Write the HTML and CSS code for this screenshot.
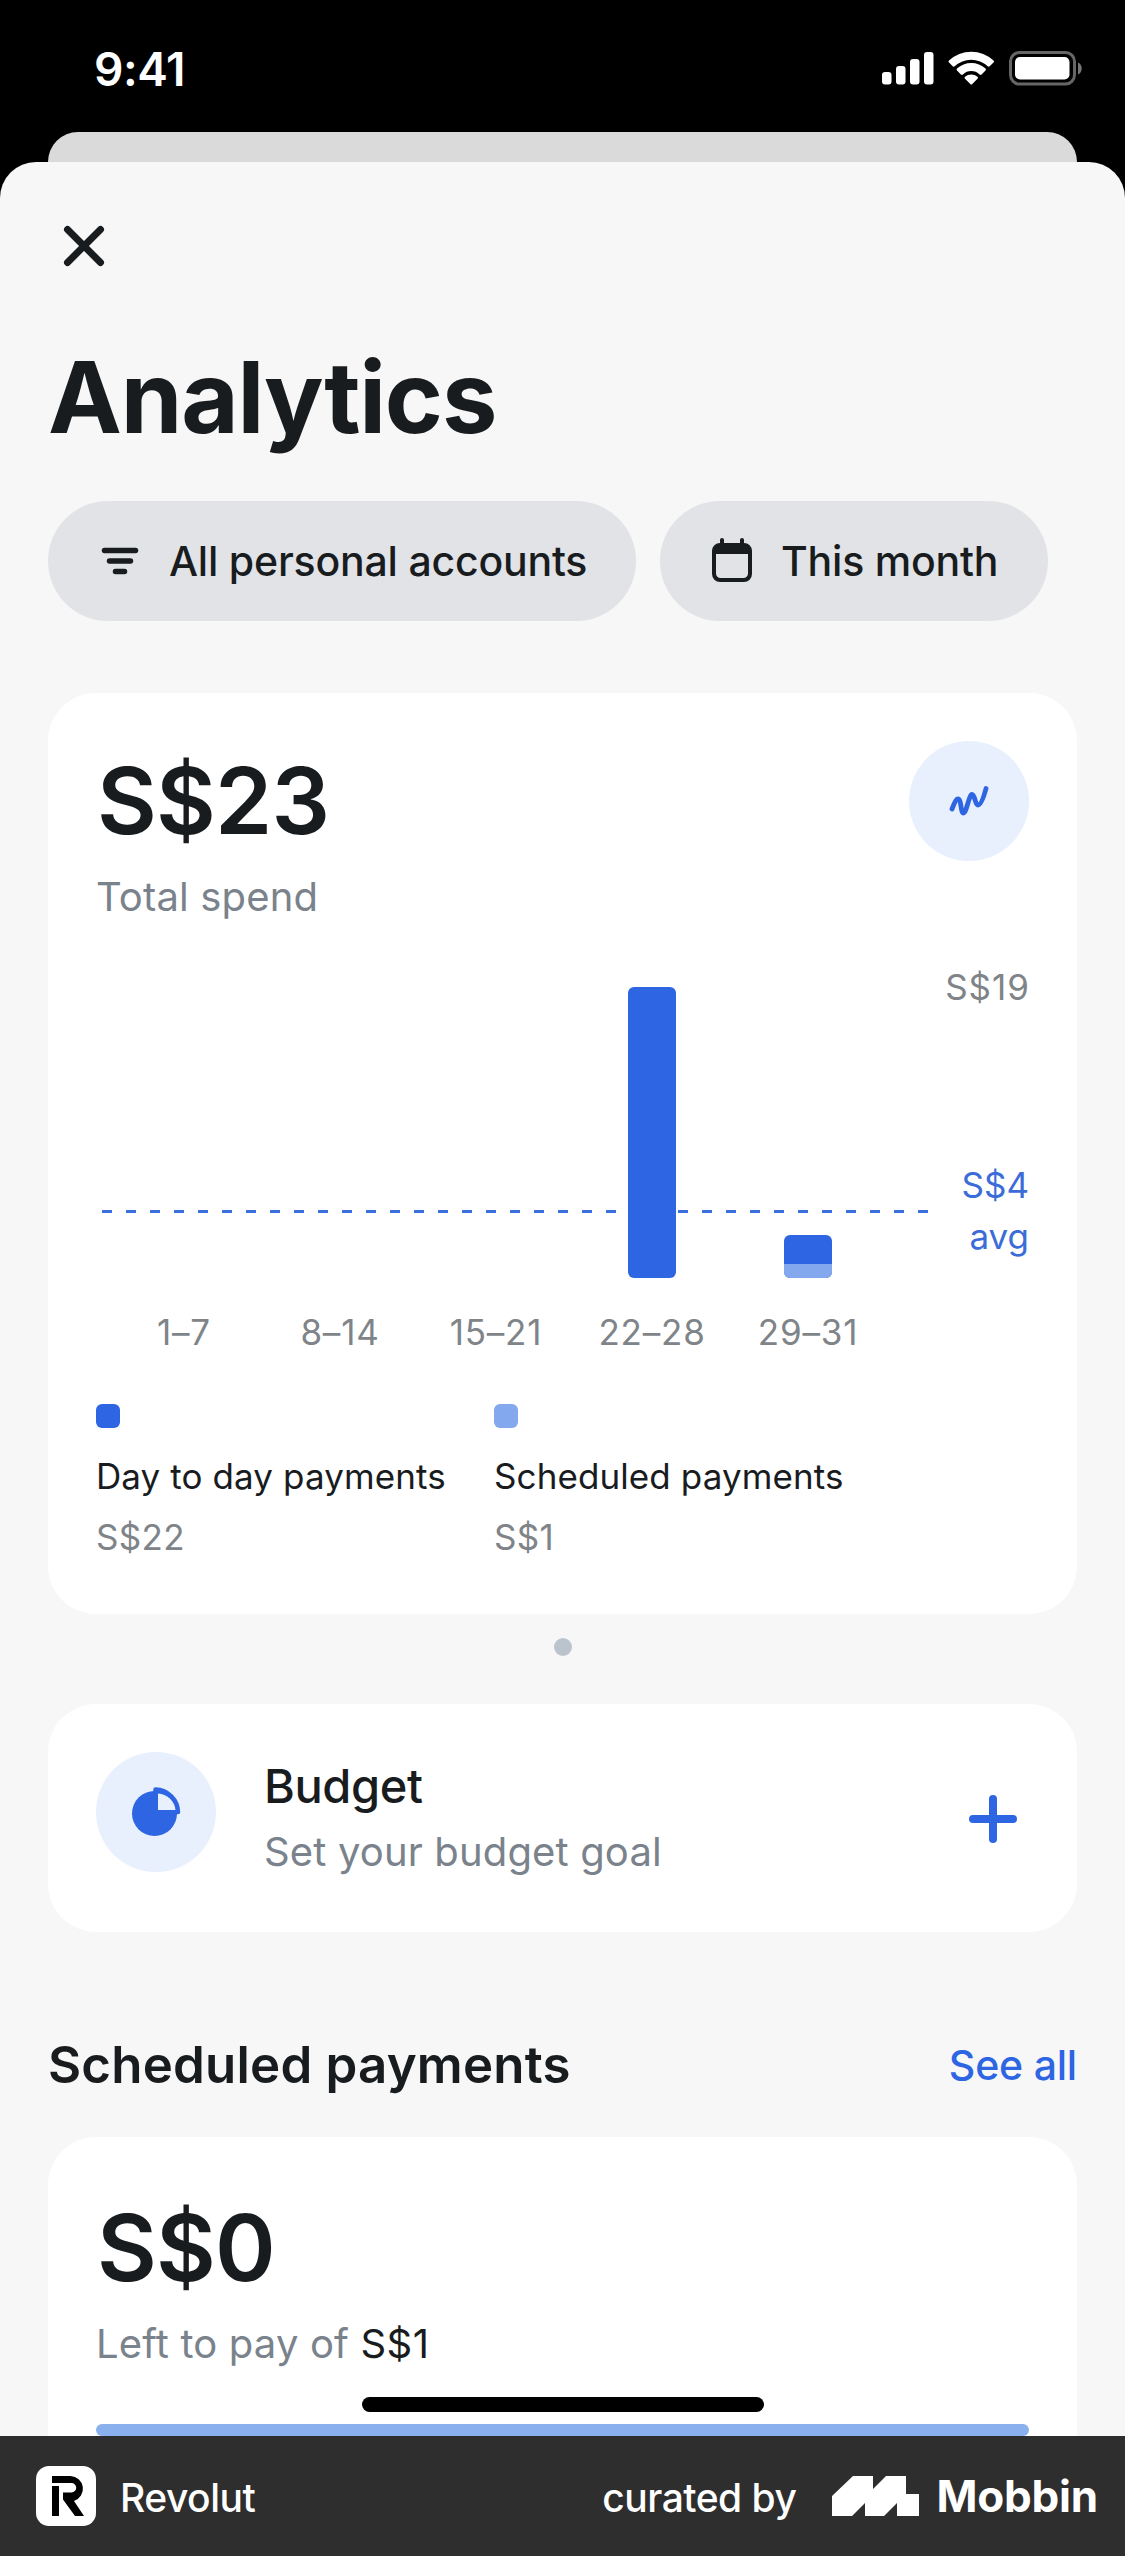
FILE: index.html
```html
<!DOCTYPE html>
<html lang="en">
<head>
    <meta charset="UTF-8">
    <meta name="viewport" content="width=device-width, initial-scale=1.0">
    <title>Analytics</title>
    <link rel="stylesheet" href="styles.css">
</head>
<body>
    <div class="screen">
        <div class="statusbar">
            <span class="time">9:41</span>
            <svg class="status-icons" width="202" height="36" viewBox="0 0 202 36">
                <g fill="#fff">
                    <rect x="0" y="21" width="9.5" height="12.5" rx="3"/>
                    <rect x="14" y="15" width="9.5" height="18.5" rx="3"/>
                    <rect x="28" y="8" width="9.5" height="25.5" rx="3"/>
                    <rect x="42" y="1" width="9.5" height="32.5" rx="3"/>
                    <path d="M67 9.500a32.500 32.500 0 0 1 44.500 0q1 1 0 2l-3.800 3.800q-1 .9-2 0a24 24 0 0 0-33 0q-1 .9-2 0L67 11.500q-1-1 0-2z"/>
                    <path d="M75 17.600a20.800 20.800 0 0 1 28.500 0q1 1 0 2l-3.900 3.900q-1 .9-2 0a12 12 0 0 0-16.700 0q-1 .9-2 0L75 19.600q-1-1 0-2z"/>
                    <path d="M83 25.800a9.300 9.300 0 0 1 12.500 0q1 1 0 2l-5.200 5.200q-1 1-2 0L83 27.800q-1-1 0-2z"/>
                    <rect x="133" y="6" width="54.5" height="22.5" rx="5"/>
                </g>
                <rect x="128.500" y="1.500" width="64" height="31.500" rx="9" fill="none" stroke="#666" stroke-width="3"/>
                <path d="M196 11.500c5 2 5 10 0 12z" fill="#777"/>
            </svg>
        </div>
        <div class="back-sheet"></div>
        <div class="sheet">
            <svg class="close" width="72" height="72" viewBox="0 0 72 72">
                <path d="M19.500 19.500l33 33M52.500 19.500l-33 33" stroke="#191c1f" stroke-width="7" stroke-linecap="round"/>
            </svg>
            <h1 class="title">Analytics</h1>
            <div class="filters">
                <div class="pill">
                    <svg width="48" height="48" viewBox="0 0 48 48">
                        <path d="M8.500 13.500h31M13.500 24h21M19.500 34.500h9" stroke="#191c1f" stroke-width="5.500" stroke-linecap="round"/>
                    </svg>
                    <span>All personal accounts</span>
                </div>
                <div class="pill pill-month">
                    <svg width="48" height="48" viewBox="0 0 48 48">
                        <path d="M12 3a2 2 0 0 1 4 0v3h16V3a2 2 0 0 1 4 0v3a8 8 0 0 1 8 8v23a8 8 0 0 1-8 8H12a8 8 0 0 1-8-8V14a8 8 0 0 1 8-8zM8 17v19.500a4.500 4.500 0 0 0 4.500 4.500h23a4.500 4.500 0 0 0 4.500-4.500V17z" fill="#191c1f" fill-rule="evenodd"/>
                    </svg>
                    <span>This month</span>
                </div>
            </div>

            <div class="card spend">
                <div class="spend-head">
                    <div>
                        <div class="amount">S$23</div>
                        <div class="caption total-label">Total spend</div>
                    </div>
                    <div class="round">
                        <svg width="48" height="48" viewBox="0 0 48 48">
                            <path d="M7 32c2-5 4-10 6-10 3.500 0 2.500 14 5.500 14s5.500-18.500 8.500-18.500c3 0 3 10.500 6 10.500s6-9 8-16.500" fill="none" stroke="#2d65e3" stroke-width="4.800" stroke-linecap="round"/>
                        </svg>
                    </div>
                </div>
                <div class="chart">
                    <div class="plot">
                        <div class="avg-line"></div>
                        <div class="col"></div>
                        <div class="col"></div>
                        <div class="col"></div>
                        <div class="col"><div class="bar" style="height:291px"></div></div>
                        <div class="col"><div class="bar" style="height:43px"><div class="part" style="height:14px"></div></div></div>
                    </div>
                    <div class="axis">
                        <div>S$19</div>
                        <div class="avg">S$4<br>avg</div>
                    </div>
                </div>
                <div class="weeks">
                    <span>1–7</span>
                    <span>8–14</span>
                    <span>15–21</span>
                    <span>22–28</span>
                    <span>29–31</span>
                </div>
                <div class="legend">
                    <div>
                        <div class="key"></div>
                        <div class="key-name">Day to day payments</div>
                        <div class="key-value">S$22</div>
                    </div>
                    <div>
                        <div class="key key-light"></div>
                        <div class="key-name">Scheduled payments</div>
                        <div class="key-value">S$1</div>
                    </div>
                </div>
            </div>
            <div class="dot"></div>

            <div class="card budget">
                <div class="round">
                    <svg width="56" height="56" viewBox="0 0 56 56">
                        <circle cx="26.500" cy="29.500" r="22.500" fill="#2d65e3"/>
                        <path d="M27.500 5.500a23 23 0 0 1 22.500 22.500H27.500z" fill="#2d65e3" stroke="#2d65e3" stroke-width="4.500" stroke-linejoin="round"/>
                        <path d="M30 9.500a18.500 18.500 0 0 1 17.500 16.500H30z" fill="#e8effd"/>
                    </svg>
                </div>
                <div class="budget-text">
                    <div class="budget-name">Budget</div>
                    <div class="caption budget-goal">Set your budget goal</div>
                </div>
                <svg class="plus" width="48" height="48" viewBox="0 0 48 48">
                    <path d="M24 4v40M4 24h40" stroke="#2d65e3" stroke-width="8" stroke-linecap="round"/>
                </svg>
            </div>

            <div class="section-head">
                <h2>Scheduled payments</h2>
                <span class="see-all">See all</span>
            </div>
            <div class="card scheduled">
                <div class="amount">S$0</div>
                <div class="caption left-label">Left to pay of <span class="dark">S$1</span></div>
                <div class="progress"></div>
            </div>
        </div>
        <div class="home-bar"></div>
    </div>
    <div class="footer">
        <svg width="60" height="60" viewBox="0 0 60 60">
            <rect width="60" height="60" rx="13" fill="#fff"/>
            <path d="M16 20h7v30h-7zM16 10h18.500a12.800 12.800 0 0 1 3.500 25L48 50h-9L27 33.500v-7h8.500a4.750 4.750 0 0 0 0-9.500H16z" fill="#000"/>
        </svg>
        <span class="brand">Revolut</span>
        <span class="curated">curated by</span>
        <svg class="mobbin-logo" width="87" height="40" viewBox="0 0 87 40">
            <path d="M0 20L21 0h20v13L54 0h20v18h13v22H65V27L52 40H33V27L20 40H0z" fill="#fff"/>
        </svg>
        <span class="mobbin">Mobbin</span>
    </div>
</body>
</html>
```
FILE: styles.css
```css
*{
    box-sizing: border-box;
}
body{
    margin: 0;
    background-color: #000;
    font-family: Inter, "Liberation Sans", sans-serif;
    color: #191c1f;
}
.screen{
    position: relative;
    height: 2436px;
    overflow: hidden;
}
.statusbar{
    display: flex;
    justify-content: space-between;
    align-items: flex-start;
    height: 132px;
    padding: 51px 41px 0 94px;
}
.time{
    color: #fff;
    font-size: 46px;
    font-weight: 600;
    line-height: 36px;
    letter-spacing: -0.4px;
}
.back-sheet{
    height: 30px;
    margin: 0 48px;
    background-color: #dadada;
    border-radius: 30px 30px 0 0;
}
.sheet{
    height: 2400px;
    padding: 48px 48px 0;
    background-color: #f7f7f7;
    border-radius: 36px 36px 0 0;
}
.close{
    display: block;
    fill: none;
}
.title{
    margin: 55px 0 44px;
    font-size: 99px;
    font-weight: 700;
    line-height: 120px;
    letter-spacing: -1.2px;
}
.filters{
    display: flex;
    gap: 24px;
    margin-bottom: 72px;
}
.pill{
    display: flex;
    align-items: center;
    gap: 25px;
    width: 588px;
    height: 120px;
    padding-left: 48px;
    background-color: #e2e3e6;
    border-radius: 60px;
    font-size: 41px;
    font-weight: 500;
    letter-spacing: -0.2px;
    white-space: nowrap;
}
.pill-month{
    width: 388px;
}
.card{
    background-color: #fff;
    border-radius: 48px;
}
.spend{
    height: 921px;
    padding: 48px;
}
.spend-head{
    display: flex;
    justify-content: space-between;
}
.amount{
    padding: 12px 0 0 1px;
    font-size: 92px;
    font-weight: 600;
    line-height: 96px;
    letter-spacing: -0.8px;
}
.caption{
    color: #7a828b;
    font-size: 40px;
    line-height: 48px;
    letter-spacing: 0.15px;
}
.total-label{
    margin-top: 24px;
}
.round{
    display: flex;
    align-items: center;
    justify-content: center;
    width: 120px;
    height: 120px;
    background-color: #e8effd;
    border-radius: 50%;
}
.chart{
    display: flex;
    justify-content: space-between;
    margin-top: 41px;
    height: 316px;
}
.plot{
    position: relative;
    display: grid;
    grid-template-columns: repeat(5, 156px);
    padding: 25px 0 0 10px;
}
/* dashed average, runs behind the bars */
.avg-line{
    position: absolute;
    left: 6px;
    bottom: 65px;
    width: 826px;
    height: 3px;
    background: repeating-linear-gradient(to right, #3b6fdd 0 10px, transparent 10px 24px);
}
.col{
    display: flex;
    align-items: flex-end;
    justify-content: center;
}
.bar{
    position: relative;
    display: flex;
    align-items: flex-end;
    width: 48px;
    background-color: #2d65e3;
    border-radius: 6px;
    overflow: hidden;
}
.part{
    width: 100%;
    background-color: #83a8ee;
}
.axis, .weeks{
    color: #7f8489;
    font-size: 35px;
}
.axis{
    display: flex;
    flex-direction: column;
    line-height: 51px;
    text-align: right;
}
.axis div:first-child{
    letter-spacing: 1px;
    margin-right: -1px;
}
.avg{
    margin-top: 147px;
    color: #3b6cd8;
}
.weeks{
    display: grid;
    grid-template-columns: repeat(5, 156px);
    margin-top: 33px;
    padding-left: 10px;
    line-height: 42px;
    letter-spacing: 0.8px;
    text-align: center;
}
.legend{
    display: grid;
    grid-template-columns: 398px 1fr;
    margin-top: 51px;
    font-size: 35px;
    line-height: 48px;
    letter-spacing: 0.1px;
}
.key{
    width: 24px;
    height: 24px;
    margin-bottom: 24px;
    background-color: #2d65e3;
    border-radius: 6px;
}
.key-light{
    background-color: #83a8ee;
}
.key-value{
    margin-top: 13px;
    color: #7f8489;
    letter-spacing: 0.3px;
}
.dot{
    width: 18px;
    height: 18px;
    margin: 24px auto 48px;
    background-color: #bbc3cc;
    border-radius: 50%;
}
.budget{
    display: flex;
    height: 228px;
    padding: 48px;
}
.budget-text{
    flex: 1;
    padding: 6px 0 0 48px;
}
.budget-name{
    font-size: 47px;
    font-weight: 500;
    line-height: 56px;
    letter-spacing: -0.4px;
}
.budget-goal{
    margin-top: 14px;
}
.plus{
    margin: 43px 12px 0 0;
}
.section-head{
    display: flex;
    justify-content: space-between;
    align-items: center;
    margin: 103px 0 42px;
    line-height: 60px;
}
.section-head h2{
    margin: 0;
    font-size: 51px;
    font-weight: 600;
    letter-spacing: 0.2px;
}
.see-all{
    color: #2d65e3;
    font-size: 41px;
    font-weight: 500;
    letter-spacing: -0.2px;
}
.scheduled{
    height: 500px;
    padding: 51px 48px 0;
}
.left-label{
    margin-top: 24px;
}
.dark{
    color: #191c1f;
    letter-spacing: 0.5px;
}
.progress{
    height: 12px;
    margin-top: 56px;
    background-color: #8ab0ee;
    border-radius: 6px;
}
.home-bar{
    position: absolute;
    left: 362px;
    bottom: 24px;
    width: 402px;
    height: 15px;
    background-color: #000;
    border-radius: 8px;
}
.footer{
    display: flex;
    align-items: center;
    height: 120px;
    padding: 0 27px 0 36px;
    background-color: #2e2e2e;
    color: #fff;
    font-size: 39px;
    font-weight: 500;
    line-height: 48px;
}
.brand, .curated{
    padding-top: 3px;
    letter-spacing: -0.5px;
}
.brand{
    margin-left: 24px;
}
.curated{
    margin-left: auto;
}
.mobbin-logo{
    margin: 0 17px 0 36px;
}
.mobbin{
    font-size: 44px;
    font-weight: 700;
    letter-spacing: -0.2px;
}
```
